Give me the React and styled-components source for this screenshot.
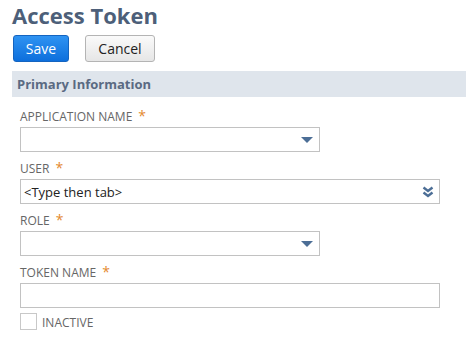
import React from "react";
import styled, { createGlobalStyle } from "styled-components";

const GlobalStyle = createGlobalStyle`
	body {
		margin: 0;
		background: #fff;
		font-family: "Open Sans", "Liberation Sans", sans-serif;
	}
`;

// styled [start]
const Page = styled("div")`
	padding: 0 0 0 12px;
	width: 454px;
`;

const Title = styled("h1")`
	margin: 0;
	font-size: 22px;
	font-weight: 700;
	line-height: 30px;
	color: #4d5f79;
`;

const ButtonRow = styled("div")`
	display: flex;
	gap: 16px;
	margin-top: 5px;
	margin-left: 1px;
`;

const Button = styled("button")`
	height: 27px;
	padding: 0;
	width: ${(p) => p.$width}px;
	border-radius: 3px;
	font-family: inherit;
	font-size: 14px;
	line-height: 25px;
	border: 1px solid ${(p) => (p.$primary ? "#1464c0" : "#b4b4b4")};
	background: ${(p) =>
		p.$primary
			? "linear-gradient(#2f93f2, #0d6fdc)"
			: "linear-gradient(#fafafa, #e6e6e6)"};
	color: ${(p) => (p.$primary ? "#fff" : "#222")};
`;

const Section = styled("div")`
	margin-top: 9px;
	height: 26px;
	background: #dfe5ec;
	display: flex;
	align-items: center;
	padding-left: 5px;
	font-size: 13px;
	font-weight: 700;
	color: #5a6a82;
`;

const Fields = styled("div")`
	padding: 13px 0 0 8px;
	display: flex;
	flex-direction: column;
	gap: 10px;
`;

const Field = styled("div")`
	display: flex;
	flex-direction: column;
	gap: 3px;
`;

const Label = styled("label")`
	display: block;
	height: 14px;
	font-size: 12px;
	line-height: 14px;
	color: #666;
	text-transform: uppercase;
`;

const Star = styled("span")`
	color: #e4892e;
	margin-left: 6px;
	font-size: 14px;
	line-height: 10px;
`;

const Box = styled("div")`
	position: relative;
	box-sizing: border-box;
	width: ${(p) => p.$width}px;
	height: 25px;
	border: 1px solid #c2c2c2;
	display: flex;
	align-items: center;
	padding-left: 3px;
	font-size: 13px;
	color: #222;
`;

const Arrow = styled("svg")`
	position: absolute;
	right: 6px;
	top: 50%;
	transform: translateY(-50%);
`;

const CheckRow = styled("div")`
	display: flex;
	align-items: flex-end;
	gap: 5px;
	margin-top: -5px;
`;

const Check = styled("span")`
	box-sizing: border-box;
	width: 17px;
	height: 17px;
	border: 1px solid #c8c8c8;
	background: #fff;
`;
// styled [end]

const Triangle = () => (
	<Arrow width="12" height="8" viewBox="0 0 12 8">
		<path d="M0 1 L12 1 L6 7 Z" fill="#4c6e96" />
	</Arrow>
);

const DoubleChevron = () => (
	<Arrow width="12" height="12" viewBox="0 0 12 12" style={{ right: 5 }}>
		<path
			d="M1.5 1.5 L6 5 L10.5 1.5 M1.5 6.5 L6 10 L10.5 6.5"
			fill="none"
			stroke="#4c6e96"
			strokeWidth="2.4"
		/>
	</Arrow>
);

const FieldList = [
	{ label: "Application Name", width: 300, icon: <Triangle /> },
	{ label: "User", width: 420, icon: <DoubleChevron />, value: "<Type then tab>" },
	{ label: "Role", width: 300, icon: <Triangle /> },
	{ label: "Token Name", width: 420 },
];

function App() {
	return (
		<Page>
			<GlobalStyle />
			<Title>Access Token</Title>
			<ButtonRow>
				<Button $primary $width={56}>Save</Button>
				<Button $width={70}>Cancel</Button>
			</ButtonRow>
			<Section>Primary Information</Section>
			<Fields>
				{FieldList.map((item, index) => (
					<Field key={index}>
						<Label>
							{item.label}
							<Star>*</Star>
						</Label>
						<Box $width={item.width}>
							{item.value}
							{item.icon}
						</Box>
					</Field>
				))}
				<CheckRow>
					<Check />
					<Label>Inactive</Label>
				</CheckRow>
			</Fields>
		</Page>
	);
}

export default App;
